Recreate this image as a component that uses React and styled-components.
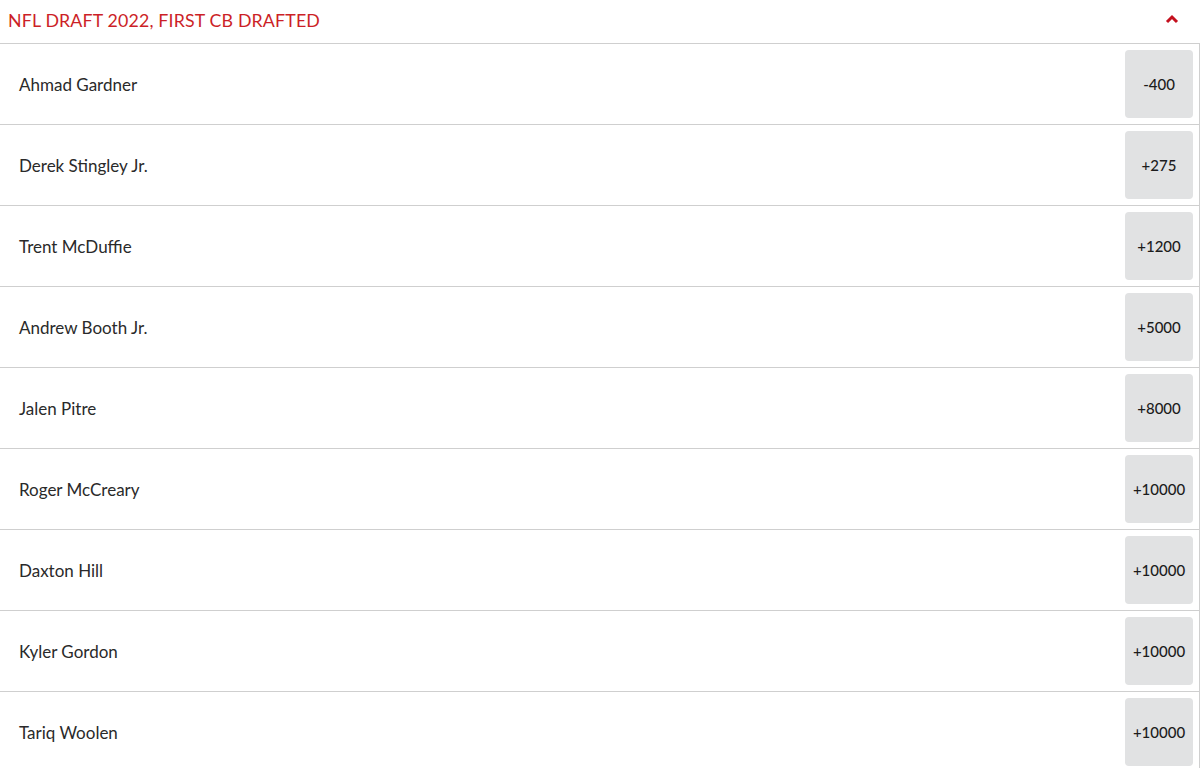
import styled, { createGlobalStyle } from "styled-components";

const GlobalStyle = createGlobalStyle`
  body {
    margin: 0;
    background: #fff;
    font-family: Lato, "Noto Sans", sans-serif;
  }
`;

const runners = [
  { name: "Ahmad Gardner", odds: "-400" },
  { name: "Derek Stingley Jr.", odds: "+275" },
  { name: "Trent McDuffie", odds: "+1200" },
  { name: "Andrew Booth Jr.", odds: "+5000" },
  { name: "Jalen Pitre", odds: "+8000" },
  { name: "Roger McCreary", odds: "+10000" },
  { name: "Daxton Hill", odds: "+10000" },
  { name: "Kyler Gordon", odds: "+10000" },
  { name: "Tariq Woolen", odds: "+10000" },
];

const App = () => {
  return (
    <>
      <GlobalStyle />
      <Market>
        <Header>
          <Title>NFL DRAFT 2022, FIRST CB DRAFTED</Title>
          <Chevron viewBox="0 0 14 10">
            <polyline points="2,8 7,3 12,8" />
          </Chevron>
        </Header>
        {runners.map((r, i) => (
          <Row key={i}>
            <Name>{r.name}</Name>
            <OddsButton>{r.odds}</OddsButton>
          </Row>
        ))}
      </Market>
    </>
  );
};

export default App;

const Market = styled.div`
  width: 1200px;
`;

const Header = styled.div`
  display: flex;
  align-items: center;
  justify-content: space-between;
  box-sizing: border-box;
  height: 44px;
  padding: 0 21px 4px 8px;
  border-bottom: 1px solid #cfcfcf;
`;

const Title = styled.div`
  color: #cc1f27;
  font-size: 17.8px;
  font-weight: 400;
  letter-spacing: 0.15px;
`;

const Chevron = styled.svg`
  width: 14px;
  height: 10px;
  margin-top: -2px;
  fill: none;
  stroke: #c4101e;
  stroke-width: 3;
`;

const Row = styled.div`
  display: flex;
  align-items: center;
  justify-content: space-between;
  height: 80px;
  padding: 0 6px 0 19px;
  border-bottom: 1px solid #cfcfcf;
  border-right: 1px solid #cfcfcf;
`;

const Name = styled.div`
  color: #2a2a2a;
  font-size: 17px;
  font-weight: 400;
`;

const OddsButton = styled.button`
  width: 68px;
  height: 68px;
  padding: 0;
  border: none;
  border-radius: 4px;
  background: #e1e2e3;
  color: #1c1c1c;
  font-family: Lato, "Noto Sans", sans-serif;
  font-size: 15px;
  font-weight: 500;
`;
